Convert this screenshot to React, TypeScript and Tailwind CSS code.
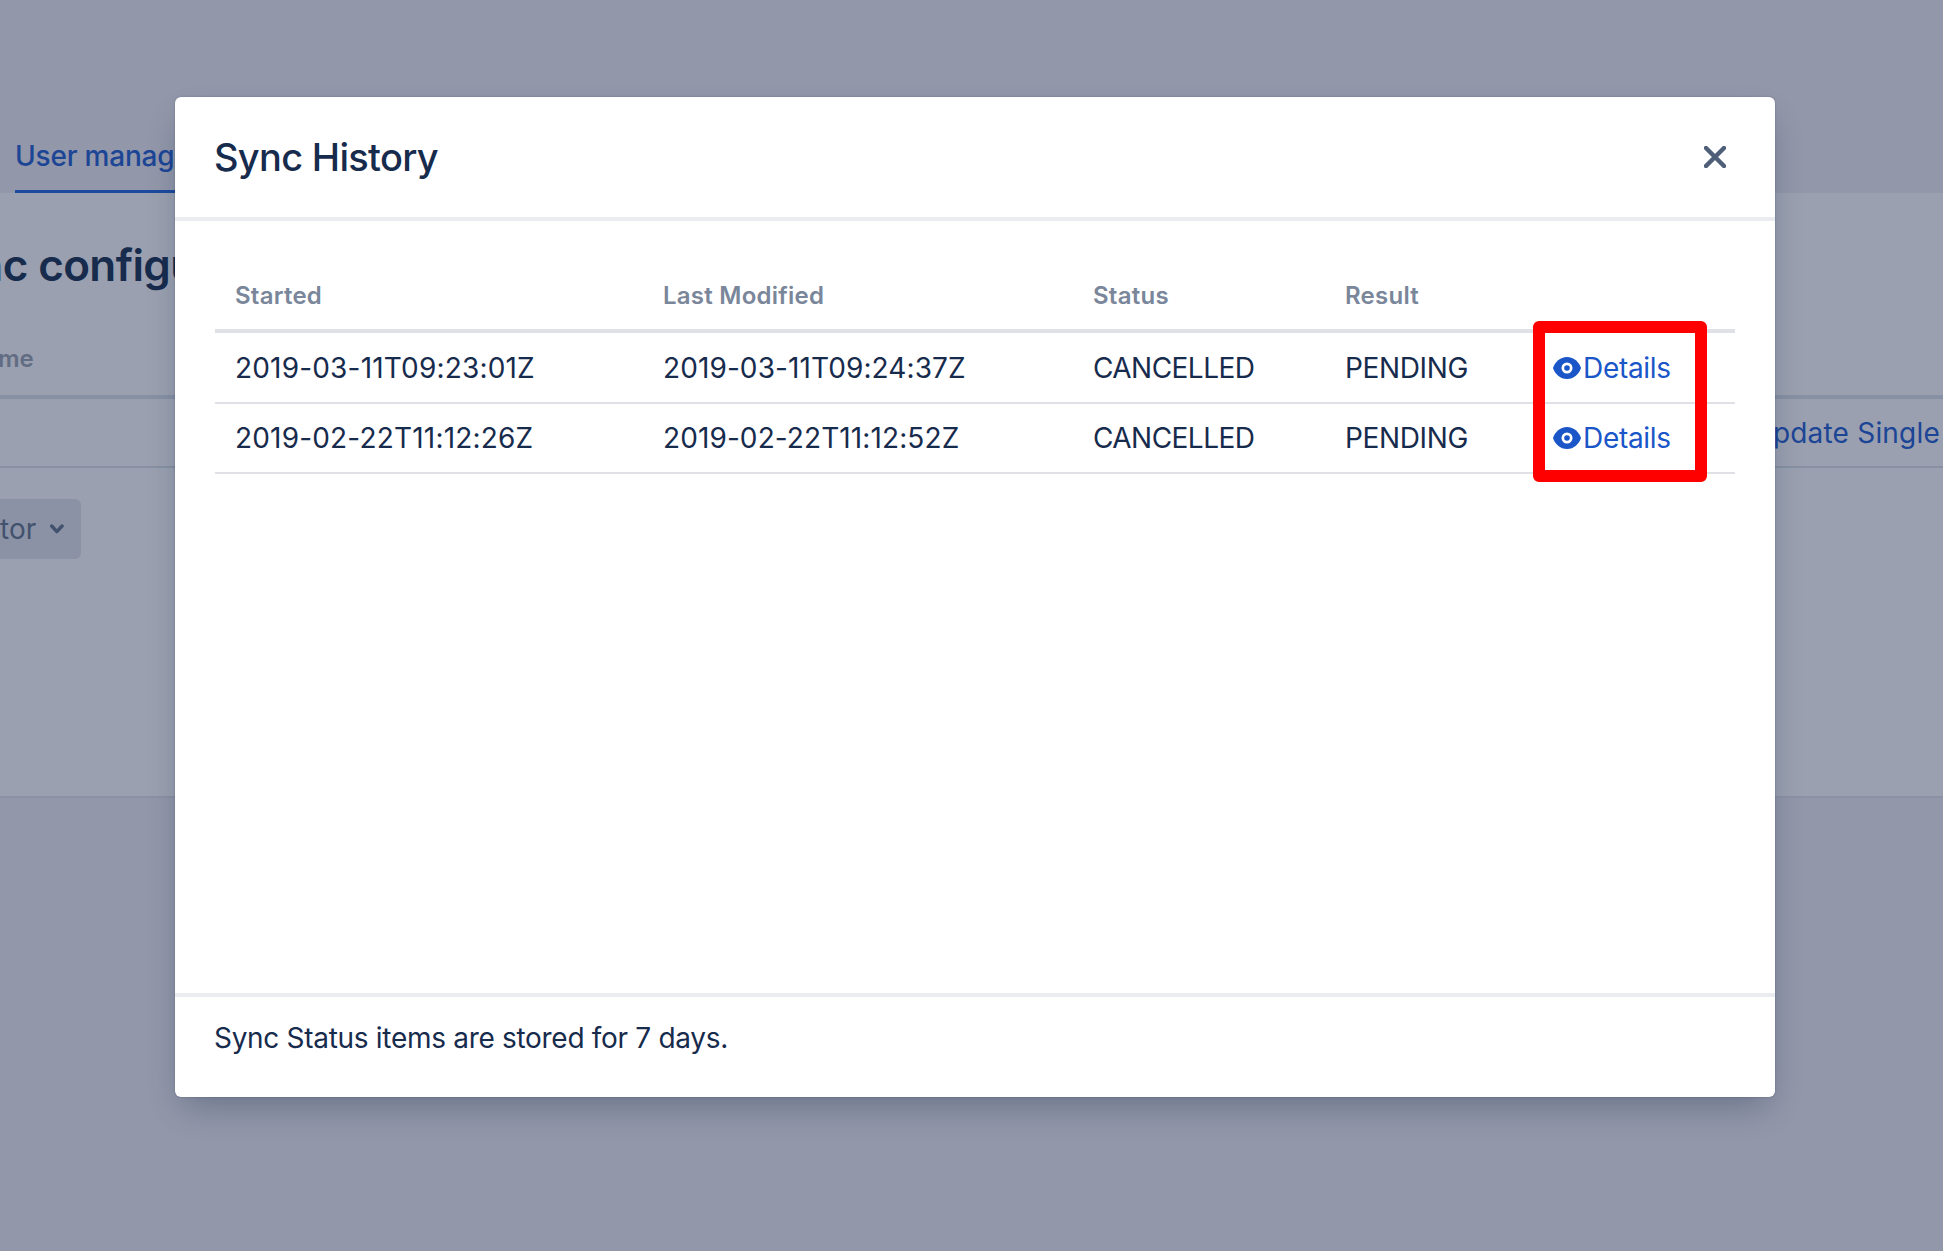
const rows = [
  { started: '2019-03-11T09:23:01Z', modified: '2019-03-11T09:24:37Z', status: 'CANCELLED', result: 'PENDING', height: 'h-[72px]' },
  { started: '2019-02-22T11:12:26Z', modified: '2019-02-22T11:12:52Z', status: 'CANCELLED', result: 'PENDING', height: 'h-[70px]' },
];

function EyeIcon() {
  return (
    <svg viewBox="0 0 28 22" className="w-[28px] h-[22px] shrink-0">
      <path d="M14 0C7 0 2 5 0 11c2 6 7 11 14 11s12-5 14-11C26 5 21 0 14 0z" fill="#1a56c8" />
      <circle cx="14" cy="11" r="5.500" fill="#ffffff" />
      <circle cx="14" cy="11" r="2.800" fill="#1a56c8" />
    </svg>
  );
}

function CloseIcon() {
  return (
    <svg viewBox="0 0 22 22" className="w-[22px] h-[22px]">
      <path d="M2 2l18 18M20 2L2 20" stroke="#505f79" strokeWidth="4.500" strokeLinecap="round" />
    </svg>
  );
}

function BackgroundPage() {
  return (
    <div className="min-h-[1251px] bg-[#9297a9] overflow-hidden" style={{ width: 1943 }}>
      {/* Tabs */}
      <div className="h-[193px] flex flex-col justify-end pl-[15px]">
        <div className="w-[400px] h-[73px] border-b-[3px] border-[#1d4a9e] text-[28px] leading-[72px] font-medium tracking-[-0.2px] text-[#1c4596]">
          User management
        </div>
      </div>

      {/* Content */}
      <div className="h-[605px] pt-[44px] bg-[#9aa0af] border-b-2 border-[#8b92a4]">
        <h1 className="-ml-[77px] text-[44px] leading-[56px] font-semibold tracking-[-0.6px] text-[#172b4d] whitespace-nowrap">
          Sync configuration
        </h1>
        <div className="h-[106px] border-b-[4px] border-[#8791a3] flex items-end pb-[22px] text-[24px] leading-[28px] font-semibold text-[#626c82]">
          <span className="-ml-[34px]">Name</span>
        </div>
        <div className="h-[69px] border-b-2 border-[#8791a3] flex items-center justify-end pr-[3px]">
          <span className="text-[28px] tracking-[0.2px] text-[#1c4596]">Update Single</span>
        </div>
        <div className="mt-[31px] flex">
          <div className="w-[81px] h-[60px] rounded-r-[6px] bg-[#8c92a5] flex items-center justify-end pr-[17px] gap-[14px] text-[28px] text-[#42526e]">
            <span>tor</span>
            <svg viewBox="0 0 16 12" className="w-[16px] h-[12px]">
              <path d="M2 2.500l6 6.500 6-6.500" fill="none" stroke="#42526e" strokeWidth="4" strokeLinecap="round" strokeLinejoin="round" />
            </svg>
          </div>
        </div>
      </div>
    </div>
  );
}

export default function App() {
  return (
    <div className="relative font-['Inter',sans-serif]">
      <BackgroundPage />

      {/* Modal */}
      <div className="absolute left-[175px] top-[97px] w-[1600px] h-[1000px] bg-white rounded-[6px] shadow-[0_16px_32px_-8px_rgba(9,30,66,0.3),0_0_2px_rgba(9,30,66,0.3)] flex flex-col">
        <header className="h-[124px] border-b-[4px] border-[#ebecf0] flex items-center justify-between pl-[39px] pr-[49px]">
          <h2 className="text-[38px] font-medium text-[#172b4d] tracking-[-0.7px]">Sync History</h2>
          <CloseIcon />
        </header>

        <div className="flex-1 px-[40px] pt-[41px]">
          <table className="w-full table-fixed border-collapse text-[28px] text-[#172b4d]">
            <colgroup>
              <col className="w-[428px]" />
              <col className="w-[430px]" />
              <col className="w-[252px]" />
              <col className="w-[208px]" />
              <col />
            </colgroup>
            <thead>
              <tr className="h-[69px] border-b-[4px] border-[#dfe1e6] text-left text-[24px] tracking-[0.25px] text-[#7a869a]">
                <th className="px-[20px] font-semibold">Started</th>
                <th className="px-[20px] font-semibold">Last Modified</th>
                <th className="px-[20px] font-semibold">Status</th>
                <th className="px-[20px] font-semibold">Result</th>
                <th />
              </tr>
            </thead>
            <tbody>
              {rows.map((row) => (
                <tr key={row.started} className={`${row.height} border-b-2 border-[#dfe1e6]`}>
                  <td className="px-[20px] tracking-[0.18px]">{row.started}</td>
                  <td className="px-[20px] tracking-[0.1px]">{row.modified}</td>
                  <td className="px-[20px] tracking-[-0.55px]">{row.status}</td>
                  <td className="px-[20px] tracking-[-0.35px]">{row.result}</td>
                  <td className="px-[20px]">
                    <a className="flex items-center gap-[2px] tracking-[-0.3px] text-[#1a56c8]">
                      <EyeIcon />
                      Details
                    </a>
                  </td>
                </tr>
              ))}
            </tbody>
          </table>
        </div>

        <footer className="h-[104px] pb-[18px] border-t-[4px] border-[#ebecf0] flex items-center pl-[39px] pr-[40px] text-[28px] tracking-[-0.3px] text-[#172b4d]">
          Sync Status items are stored for 7 days.
        </footer>

        {/* Red highlight around the details links */}
        <div className="absolute left-[1358px] top-[224px] w-[174px] h-[161px] border-[12px] border-[#ff0000] rounded-[6px]" />
      </div>
    </div>
  );
}
